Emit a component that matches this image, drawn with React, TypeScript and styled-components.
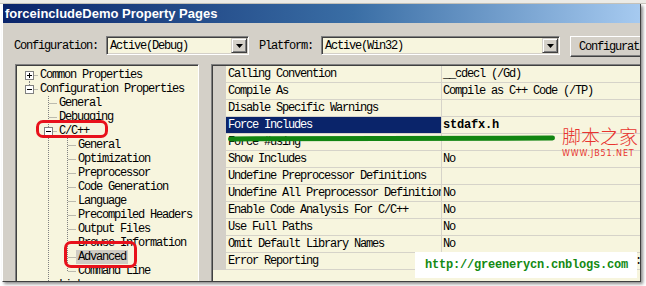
import React from 'react';
import styled, { createGlobalStyle } from 'styled-components';

const mono = `"Liberation Mono", "DejaVu Sans Mono", monospace`;
const cream = '#F7F5DE';
const face = '#D4D0C8';

const GlobalStyle = createGlobalStyle`
  html, body { margin: 0; padding: 0; background: #fff; }
  body { font-family: ${mono}; }
`;

const Page = styled.div`
  position: relative;
  width: 646px;
  height: 286px;
  overflow: hidden;
  background: #fff;
  padding: 4px 0 0 2px;
  box-sizing: border-box;
`;

const TopStrip = styled.div`
  position: absolute;
  left: 0;
  top: 0;
  width: 646px;
  height: 4px;
  background: #ecebe6;
  border-bottom: 1px solid #c8c6be;
  box-sizing: border-box;
`;

const Dialog = styled.div`
  position: relative;
  width: 639px;
  height: 278px;
  box-sizing: border-box;
  display: flex;
  flex-direction: column;
  background: ${face};
  border-left: 1px solid #fff;
  border-right: 1px solid #404040;
  border-bottom: 1px solid #404040;
  box-shadow: 2px 2px 3px rgba(0, 0, 0, 0.45);
  overflow: hidden;
`;

const TitleBar = styled.div`
  flex-shrink: 0;
  height: 19px;
  display: flex;
  align-items: center;
  padding-left: 2px;
  background: linear-gradient(to right, #0a246a 0%, #3a6ea5 55%, #a6caf0 100%);
  color: #fff;
  font: bold 13px "Liberation Sans", Arial, sans-serif;
  white-space: nowrap;
`;

const ConfigRow = styled.div`
  flex-shrink: 0;
  height: 41px;
  box-sizing: border-box;
  padding: 4px 0 0 11px;
  display: flex;
  align-items: center;
`;

const Label = styled.span`
  font: 12px ${mono};
  letter-spacing: -1.2px;
  color: #000;
  margin-right: 8px;
  padding-top: 1px;
  white-space: nowrap;
`;

const Combo = styled.div<{ $width: number }>`
  flex-shrink: 0;
  width: ${p => p.$width}px;
  height: 19px;
  box-sizing: border-box;
  display: flex;
  align-items: center;
  margin-right: 10px;
  background: ${cream};
  border: 1px solid;
  border-color: #808080 #fff #fff #808080;
  box-shadow: inset 1px 1px #404040, inset -1px -1px ${face};
`;

const ComboText = styled.span`
  flex: 1;
  padding: 1px 0 0 3px;
  font: 12px ${mono};
  letter-spacing: -1.2px;
  white-space: nowrap;
`;

const DropButton = styled.div`
  width: 16px;
  height: 15px;
  margin-right: 1px;
  box-sizing: border-box;
  display: flex;
  align-items: center;
  justify-content: center;
  background: ${face};
  border: 1px solid;
  border-color: ${face} #404040 #404040 ${face};
  box-shadow: inset 1px 1px #fff, inset -1px -1px #808080;
`;

const PushButton = styled.div`
  flex-shrink: 0;
  width: 120px;
  height: 21px;
  box-sizing: border-box;
  margin-top: 2px;
  padding: 1px 0 0 8px;
  display: flex;
  align-items: center;
  background: ${face};
  border: 1px solid;
  border-color: #fff #404040 #404040 #fff;
  box-shadow: inset -1px -1px #808080;
  font: 12px ${mono};
  letter-spacing: -1.2px;
  white-space: nowrap;
`;

const Content = styled.div`
  flex: 1;
  min-height: 0;
  display: flex;
  align-items: flex-start;
  gap: 12px;
  padding-left: 12px;
  overflow: hidden;
`;

const TreePanel = styled.div`
  flex-shrink: 0;
  width: 184px;
  height: 240px;
  box-sizing: border-box;
  padding: 3px 0 0 1px;
  background: ${cream};
  border: 1px solid;
  border-color: #808080 #fff #fff #808080;
  box-shadow: inset 1px 1px #404040;
`;

const TreeRow = styled.div`
  height: 14px;
  display: flex;
  align-items: stretch;
`;

const TreeLabel = styled.span<{ $selected?: boolean }>`
  box-sizing: border-box;
  height: 14px;
  padding: 1px 2px 0;
  font: 12px/13px ${mono};
  letter-spacing: -1.2px;
  white-space: nowrap;
  color: #000;
  background: ${p => (p.$selected ? '#cfccc4' : 'transparent')};
`;

const PropPanel = styled.div`
  flex: 1;
  height: 240px;
  box-sizing: border-box;
  padding: 1px 0 0 1px;
  background: ${cream};
  border-top: 1px solid #808080;
  border-left: 1px solid #808080;
  box-shadow: inset 1px 1px #404040;
`;

const Grid = styled.div`
  display: flex;
`;

const Gutter = styled.div`
  width: 13px;
  flex-shrink: 0;
  background: ${face};
`;

const Rows = styled.div`
  flex: 1;
  min-width: 0;
`;

const GridRow = styled.div`
  height: 17px;
  box-sizing: border-box;
  display: flex;
  border-bottom: 1px solid #d6d3c9;
`;

const NameCell = styled.div<{ $selected?: boolean }>`
  width: 216px;
  flex-shrink: 0;
  box-sizing: border-box;
  padding: 1px 0 0 2px;
  border-right: 1px solid #d6d3c9;
  overflow: hidden;
  white-space: nowrap;
  font: 12px/15px ${mono};
  letter-spacing: -1.2px;
  background: ${p => (p.$selected ? '#0a246a' : 'transparent')};
  color: ${p => (p.$selected ? '#fff' : '#000')};
`;

const ValueCell = styled.div<{ $bold?: boolean }>`
  flex: 1;
  padding: 1px 0 0 1px;
  overflow: hidden;
  white-space: nowrap;
  font: ${p => (p.$bold ? 'bold' : 'normal')} 12px/15px ${mono};
  letter-spacing: ${p => (p.$bold ? '-0.2px' : '-1.2px')};
  color: #000;
`;

/* annotations drawn over the screenshot */
const RedRing = styled.div<{ $x: number; $y: number; $w: number; $h: number }>`
  position: absolute;
  left: ${p => p.$x}px;
  top: ${p => p.$y}px;
  width: ${p => p.$w}px;
  height: ${p => p.$h}px;
  box-sizing: border-box;
  border: 3px solid #e8111b;
  border-radius: 7px;
`;

const GreenStroke = styled.div`
  position: absolute;
  left: 228px;
  top: 136px;
  width: 327px;
  height: 5px;
  border-radius: 3px;
  background: #118511;
  transform: rotate(-0.15deg);
`;

const Watermark = styled.div`
  position: absolute;
  left: 562px;
  top: 125px;
  display: flex;
  flex-direction: column;
  align-items: flex-start;
  color: #e8342f;
`;

const WatermarkTitle = styled.span`
  font: 19px/22px "Noto Sans CJK SC", sans-serif;
  font-weight: 300;
`;

const WatermarkSite = styled.span`
  font: 8px/9px "DejaVu Sans", sans-serif;
  letter-spacing: 0.9px;
  margin-top: 2px;
`;

const UrlBox = styled.div`
  position: absolute;
  left: 415px;
  top: 252px;
  width: 222px;
  height: 26px;
  box-sizing: border-box;
  padding-left: 10px;
  display: flex;
  align-items: center;
  background: #fff;
  color: #138a13;
  font: bold 12px ${mono};
  letter-spacing: -0.2px;
`;

type Own = 'full' | 'up' | 'down';
interface TreeItem {
  label: string;
  level: number;
  own: Own;
  box?: '+' | '-';
  anc?: number[];
  selected?: boolean;
}

const tree: TreeItem[] = [
  { label: 'Common Properties', level: 0, own: 'down', box: '+' },
  { label: 'Configuration Properties', level: 0, own: 'up', box: '-' },
  { label: 'General', level: 1, own: 'full' },
  { label: 'Debugging', level: 1, own: 'full' },
  { label: 'C/C++', level: 1, own: 'full', box: '-' },
  { label: 'General', level: 2, own: 'full', anc: [1] },
  { label: 'Optimization', level: 2, own: 'full', anc: [1] },
  { label: 'Preprocessor', level: 2, own: 'full', anc: [1] },
  { label: 'Code Generation', level: 2, own: 'full', anc: [1] },
  { label: 'Language', level: 2, own: 'full', anc: [1] },
  { label: 'Precompiled Headers', level: 2, own: 'full', anc: [1] },
  { label: 'Output Files', level: 2, own: 'full', anc: [1] },
  { label: 'Browse Information', level: 2, own: 'full', anc: [1] },
  { label: 'Advanced', level: 2, own: 'full', anc: [1], selected: true },
  { label: 'Command Line', level: 2, own: 'up', anc: [1] },
  { label: 'Linker', level: 1, own: 'full', box: '+' },
];

const props: { name: string; value: string; selected?: boolean; bold?: boolean }[] = [
  { name: 'Calling Convention', value: '__cdecl (/Gd)' },
  { name: 'Compile As', value: 'Compile as C++ Code (/TP)' },
  { name: 'Disable Specific Warnings', value: '' },
  { name: 'Force Includes', value: 'stdafx.h', selected: true, bold: true },
  { name: 'Force #using', value: '' },
  { name: 'Show Includes', value: 'No' },
  { name: 'Undefine Preprocessor Definitions', value: '' },
  { name: 'Undefine All Preprocessor Definitions', value: 'No' },
  { name: 'Enable Code Analysis For C/C++', value: 'No' },
  { name: 'Use Full Paths', value: 'No' },
  { name: 'Omit Default Library Names', value: 'No' },
  { name: 'Error Reporting', value: 'Prompt Immediately (/errorReport:prompt)' },
];

const dot = { stroke: '#808080', strokeWidth: 1, strokeDasharray: '1 1' };

const Connector: React.FC<{ item: TreeItem }> = ({ item }) => {
  const w = 21 + 19 * item.level;
  const cx = 12 + 19 * item.level + 0.5;
  const y0 = item.own === 'down' ? 7 : 0;
  const y1 = item.own === 'up' ? 7 : 14;
  return (
    <svg width={w} height={14} style={{ flexShrink: 0, display: 'block' }}>
      {(item.anc || []).map(a => (
        <line key={a} x1={12 + 19 * a + 0.5} y1={0} x2={12 + 19 * a + 0.5} y2={14} {...dot} />
      ))}
      <line x1={cx} y1={y0} x2={cx} y2={y1} {...dot} />
      <line x1={cx + (item.box ? 5 : 1)} y1={7.5} x2={w} y2={7.5} {...dot} />
      {item.box && (
        <g>
          <rect x={cx - 4} y={3.5} width={8} height={8} fill="#fff" stroke="#808080" />
          <line x1={cx - 2.5} y1={7.5} x2={cx + 2.5} y2={7.5} stroke="#000" />
          {item.box === '+' && <line x1={cx} y1={5} x2={cx} y2={10} stroke="#000" />}
        </g>
      )}
    </svg>
  );
};

const Arrow = () => (
  <svg width="7" height="4" viewBox="0 0 7 4">
    <polygon points="0,0 7,0 3.5,4" fill="#000" />
  </svg>
);

export default function App() {
  return (
    <>
      <GlobalStyle />
      <Page>
        <TopStrip />
        <Dialog>
          <TitleBar>forceincludeDemo Property Pages</TitleBar>
          <ConfigRow>
            <Label>Configuration:</Label>
            <Combo $width={143}>
              <ComboText>Active(Debug)</ComboText>
              <DropButton><Arrow /></DropButton>
            </Combo>
            <Label>Platform:</Label>
            <Combo $width={239}>
              <ComboText>Active(Win32)</ComboText>
              <DropButton><Arrow /></DropButton>
            </Combo>
            <PushButton>Configuration Manager...</PushButton>
          </ConfigRow>
          <Content>
            <TreePanel>
              {tree.map((item, i) => (
                <TreeRow key={i}>
                  <Connector item={item} />
                  <TreeLabel $selected={item.selected}>{item.label}</TreeLabel>
                </TreeRow>
              ))}
            </TreePanel>
            <PropPanel>
              <Grid>
                <Gutter />
                <Rows>
                  {props.map(p => (
                    <GridRow key={p.name}>
                      <NameCell $selected={p.selected}>{p.name}</NameCell>
                      <ValueCell $bold={p.bold}>{p.value}</ValueCell>
                    </GridRow>
                  ))}
                </Rows>
              </Grid>
            </PropPanel>
          </Content>
        </Dialog>

        <RedRing $x={36} $y={120} $w={72} $h={18} />
        <RedRing $x={64} $y={241} $w={73} $h={27} />
        <GreenStroke />
        <Watermark>
          <WatermarkTitle>脚本之家</WatermarkTitle>
          <WatermarkSite>WWW.JB51.NET</WatermarkSite>
        </Watermark>
        <UrlBox>http://greenerycn.cnblogs.com</UrlBox>
      </Page>
    </>
  );
}
